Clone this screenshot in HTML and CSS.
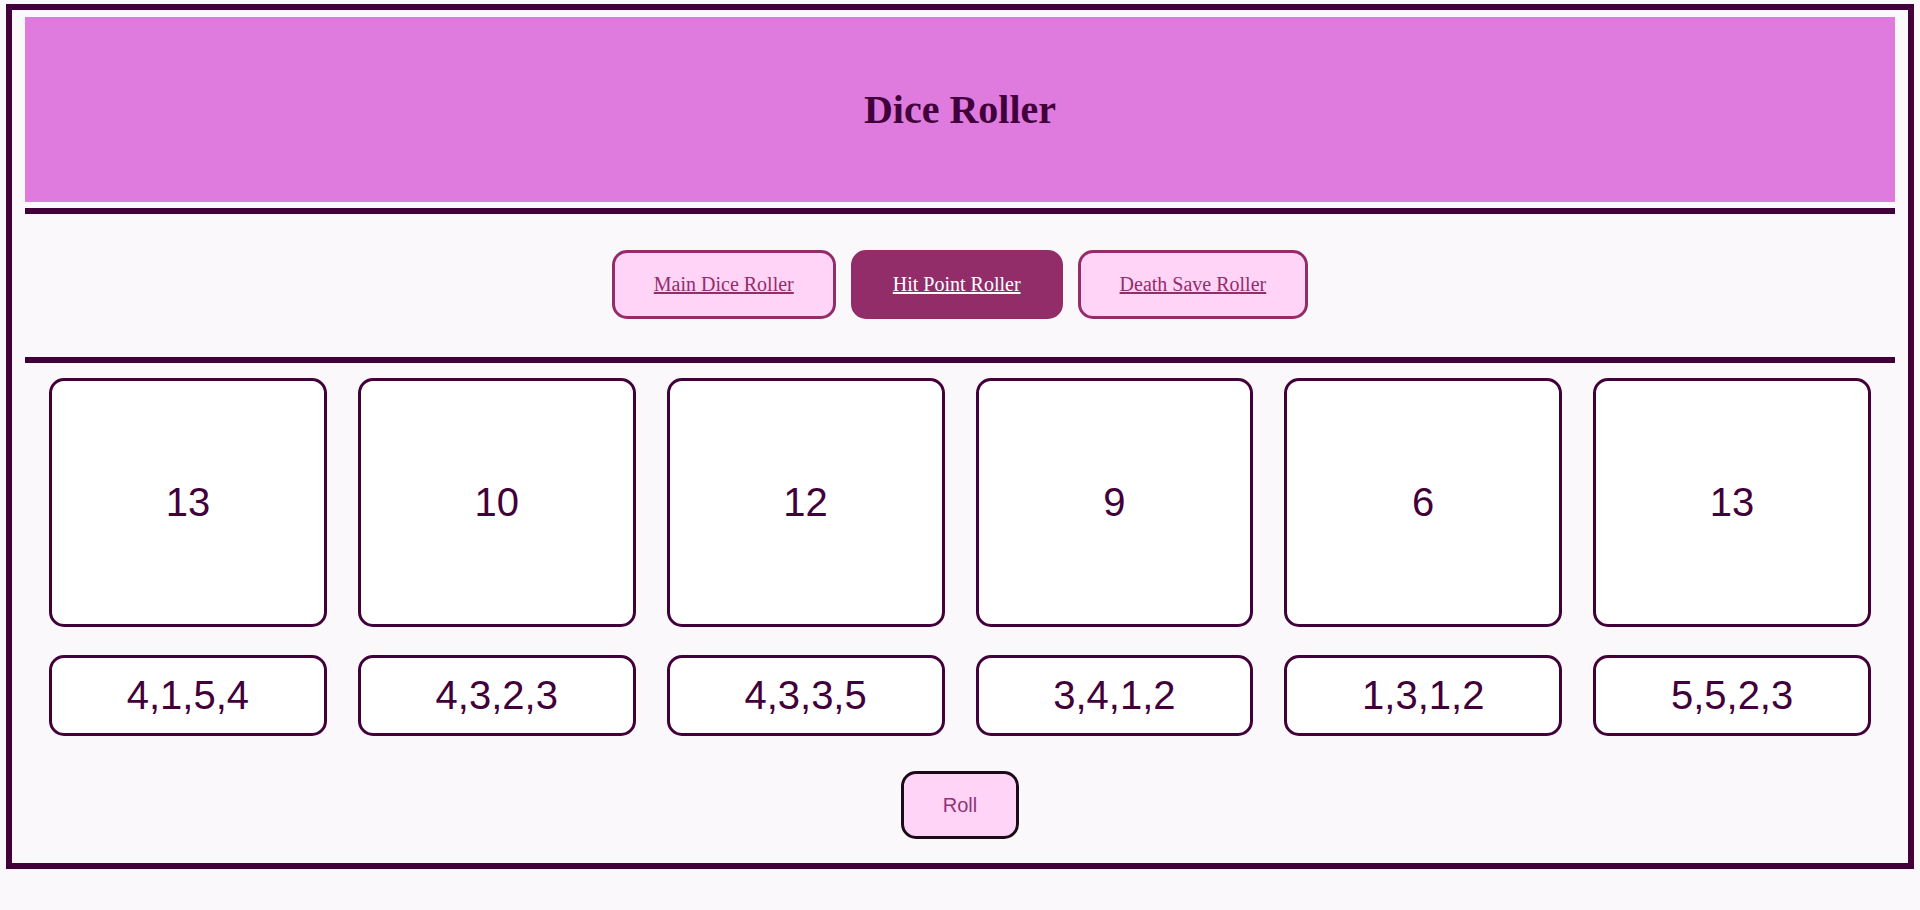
FILE: index.html
```html
<!DOCTYPE html>
<html lang="en">
<head>
<meta charset="utf-8">
<title>Dice Roller</title>
<link rel="stylesheet" href="styles.css">
</head>
<body>
<div class="frame">
  <header class="banner">
    <h1 class="title">Dice Roller</h1>
  </header>
  <div class="rule"></div>
  <nav class="nav">
    <a class="nav-btn" href="#">Main Dice Roller</a>
    <a class="nav-btn active" href="#">Hit Point Roller</a>
    <a class="nav-btn" href="#">Death Save Roller</a>
  </nav>
  <div class="rule rule-tight"></div>
  <main class="dice">
    <div class="die">13</div>
    <div class="die">10</div>
    <div class="die">12</div>
    <div class="die">9</div>
    <div class="die">6</div>
    <div class="die">13</div>
    <div class="rolls">4,1,5,4</div>
    <div class="rolls">4,3,2,3</div>
    <div class="rolls">4,3,3,5</div>
    <div class="rolls">3,4,1,2</div>
    <div class="rolls">1,3,1,2</div>
    <div class="rolls">5,5,2,3</div>
  </main>
  <div class="actions">
    <button class="roll-btn" type="button">Roll</button>
  </div>
</div>
</body>
</html>
```
FILE: styles.css
```css
html, body {
  margin: 0;
  padding: 0;
  background: #fbf8fc;
}

.frame {
  margin: 4px 6px 0 6px;
  border: 6px solid #42003a;
  padding: 7px 13px 24px;
}

.banner {
  height: 185px;
  background: #df7bdf;
  display: flex;
  align-items: center;
  justify-content: center;
}

.title {
  margin: 0;
  font-family: "Liberation Serif", "Times New Roman", serif;
  font-weight: bold;
  font-size: 40px;
  color: #42003a;
}

.rule {
  height: 6px;
  background: #42003a;
  margin-top: 6px;
}

.rule-tight {
  margin-top: 0;
}

.nav {
  display: flex;
  justify-content: center;
  gap: 15px;
  padding: 36px 0 38px;
}

.nav-btn {
  display: block;
  box-sizing: border-box;
  height: 69px;
  padding: 0 39px;
  line-height: 63px;
  border: 3px solid #932d6a;
  border-radius: 15px;
  background: #ffd4f7;
  color: #932d6a;
  font-family: "Liberation Serif", "Times New Roman", serif;
  font-size: 20px;
  text-decoration: underline;
}

.nav-btn.active {
  background: #932d6a;
  color: #ffffff;
}

.dice {
  display: grid;
  grid-template-columns: repeat(6, 1fr);
  column-gap: 31px;
  row-gap: 28px;
  padding: 15px 24px 0 24px;
}

.die,
.rolls {
  box-sizing: border-box;
  border: 3px solid #42003a;
  border-radius: 15px;
  background: #ffffff;
  display: flex;
  align-items: center;
  justify-content: center;
  font-family: "Liberation Sans", Arial, sans-serif;
  font-size: 40px;
  color: #42003a;
}

.die {
  height: 249px;
}

.rolls {
  height: 81px;
}

.actions {
  display: flex;
  justify-content: center;
  margin-top: 35px;
}

.roll-btn {
  box-sizing: border-box;
  width: 118px;
  height: 68px;
  border: 3px solid #1d0a17;
  border-radius: 15px;
  background: #ffd4f7;
  color: #8f3577;
  font-family: "Liberation Sans", Arial, sans-serif;
  font-size: 20px;
  padding: 0;
}
```
